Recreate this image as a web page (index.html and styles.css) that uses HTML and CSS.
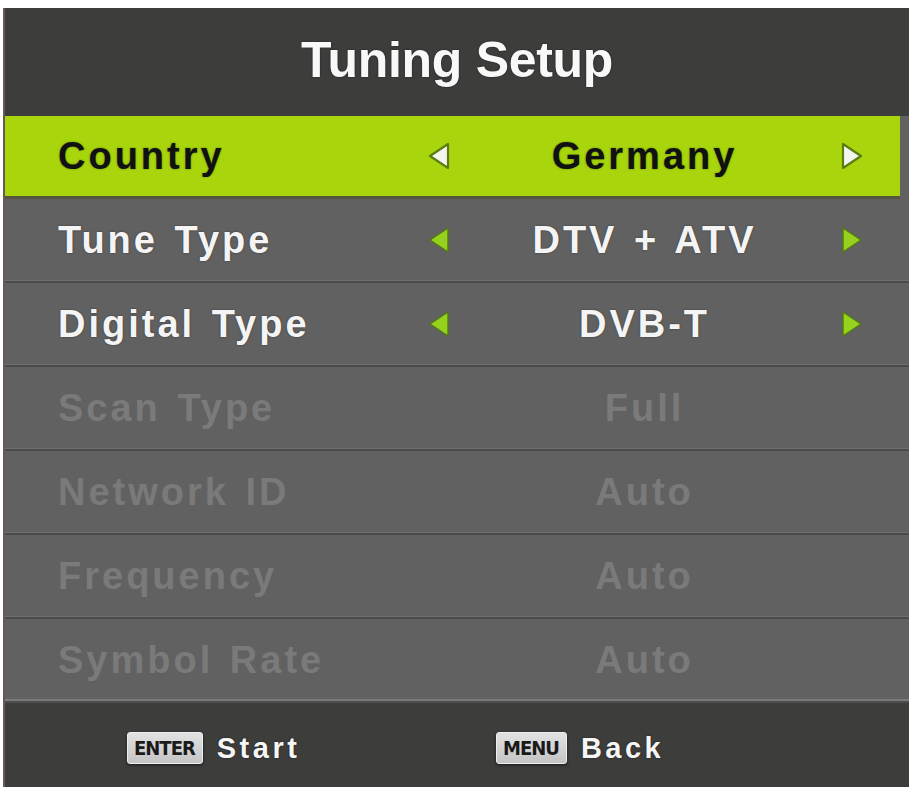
FILE: index.html
```html
<!DOCTYPE html>
<html lang="en">
<head>
<meta charset="utf-8">
<title>Tuning Setup</title>
<link rel="stylesheet" href="styles.css">
</head>
<body>
<div class="panel">
  <div class="title">Tuning Setup</div>
  <div class="rows">
    <div class="row selected">
      <span class="label">Country</span>
      <svg class="arrow" viewBox="0 0 24 30"><polygon points="3,15 21,3 21,27"/></svg>
      <span class="value">Germany</span>
      <svg class="arrow right" viewBox="0 0 24 30"><polygon points="21,15 3,3 3,27"/></svg>
    </div>
    <div class="row">
      <span class="label">Tune Type</span>
      <svg class="arrow" viewBox="0 0 24 30"><polygon points="3,15 21,3 21,27"/></svg>
      <span class="value">DTV + ATV</span>
      <svg class="arrow right" viewBox="0 0 24 30"><polygon points="21,15 3,3 3,27"/></svg>
    </div>
    <div class="row">
      <span class="label">Digital Type</span>
      <svg class="arrow" viewBox="0 0 24 30"><polygon points="3,15 21,3 21,27"/></svg>
      <span class="value">DVB-T</span>
      <svg class="arrow right" viewBox="0 0 24 30"><polygon points="21,15 3,3 3,27"/></svg>
    </div>
    <div class="row disabled">
      <span class="label">Scan Type</span>
      <span></span>
      <span class="value">Full</span>
      <span></span>
    </div>
    <div class="row disabled">
      <span class="label">Network ID</span>
      <span></span>
      <span class="value">Auto</span>
      <span></span>
    </div>
    <div class="row disabled">
      <span class="label">Frequency</span>
      <span></span>
      <span class="value">Auto</span>
      <span></span>
    </div>
    <div class="row disabled">
      <span class="label">Symbol Rate</span>
      <span></span>
      <span class="value">Auto</span>
      <span></span>
    </div>
  </div>
  <div class="footer">
    <div class="hint"><span class="key">ENTER</span><span class="hint-text">Start</span></div>
    <div class="hint"><span class="key">MENU</span><span class="hint-text">Back</span></div>
  </div>
</div>
</body>
</html>
```
FILE: styles.css
```css
html, body {
  margin: 0;
  padding: 0;
  background: #ffffff;
}
body {
  width: 909px;
  height: 787px;
  overflow: hidden;
  font-family: "Liberation Sans", Arial, sans-serif;
}
.panel {
  margin: 8px 0 0 3px;
  width: 906px;
  height: 779px;
  background: #3d3d3b;
  border-left: 2px solid #6a5858;
  box-sizing: border-box;
  display: flex;
  flex-direction: column;
}
.title {
  height: 108px;
  flex: none;
  display: flex;
  align-items: center;
  justify-content: center;
  color: #f8f8f8;
  font-weight: bold;
  font-size: 50px;
  letter-spacing: -0.3px;
  text-shadow: 0 0 2px rgba(0,0,0,0.6);
  padding-bottom: 4px;
  box-sizing: border-box;
}
.rows {
  background: #616161;
  flex: none;
  display: flex;
  flex-direction: column;
}
.row {
  height: 84px;
  box-sizing: border-box;
  border-bottom: 2px solid #4a4a4a;
  box-shadow: inset 0 -1px 0 #6e6e6e;
  display: grid;
  grid-template-columns: 369px 24px 384px 24px;
  column-gap: 0;
  align-items: center;
  padding-left: 53px;
  font-weight: bold;
  font-size: 38px;
  letter-spacing: 3px;
  word-spacing: 3px;
  color: #f4f4f4;
  text-shadow: 0 0 2px rgba(0,0,0,0.5);
}
.row .value {
  text-align: center;
  padding-left: 3px;
}
.row .arrow {
  width: 24px;
  height: 30px;
  display: block;
}
.row .arrow polygon {
  fill: #96d11e;
  stroke: #4f7a14;
  stroke-width: 1.4;
  stroke-linejoin: round;
}
.row .arrow.right {
  margin-left: 5px;
}
.row.selected {
  background: #a8d50c;
  margin-right: 9px;
  border-bottom: 3px solid #56573e;
  box-shadow: none;
  color: #111111;
  text-shadow: 0 0 2px rgba(30,50,0,0.5);
  height: 83px;
}
.row.selected .arrow polygon {
  fill: #f4f6ee;
  stroke: #5b7c12;
  stroke-width: 2.2;
}
.row.disabled {
  color: #7a7a7a;
  text-shadow: none;
}
.row:last-child {
  border-bottom: 2px solid #4e4e4e;
  box-shadow: inset 0 -2px 0 #7a7a7a;
}
.footer {
  flex: 1;
  display: grid;
  grid-template-columns: 369px 1fr;
  align-items: center;
  padding-left: 122px;
  padding-top: 6px;
}
.hint {
  display: flex;
  align-items: center;
}
.key {
  display: inline-block;
  background: linear-gradient(#e2e2e2, #c4c4c4);
  border: 1px solid #eeeeee;
  border-radius: 3px;
  color: #1a1a1a;
  font-family: "Liberation Sans Narrow", "DejaVu Sans Condensed", sans-serif;
  font-weight: bold;
  font-size: 20px;
  letter-spacing: -1px;
  line-height: 30px;
  height: 30px;
  padding: 0 7px 0 6px;
  box-shadow: 0 1px 3px rgba(0,0,0,0.6);
}
.hint-text {
  color: #f6f6f6;
  font-weight: bold;
  font-size: 29px;
  letter-spacing: 3.5px;
  margin-left: 14px;
  text-shadow: 0 0 2px rgba(0,0,0,0.6);
}
```
